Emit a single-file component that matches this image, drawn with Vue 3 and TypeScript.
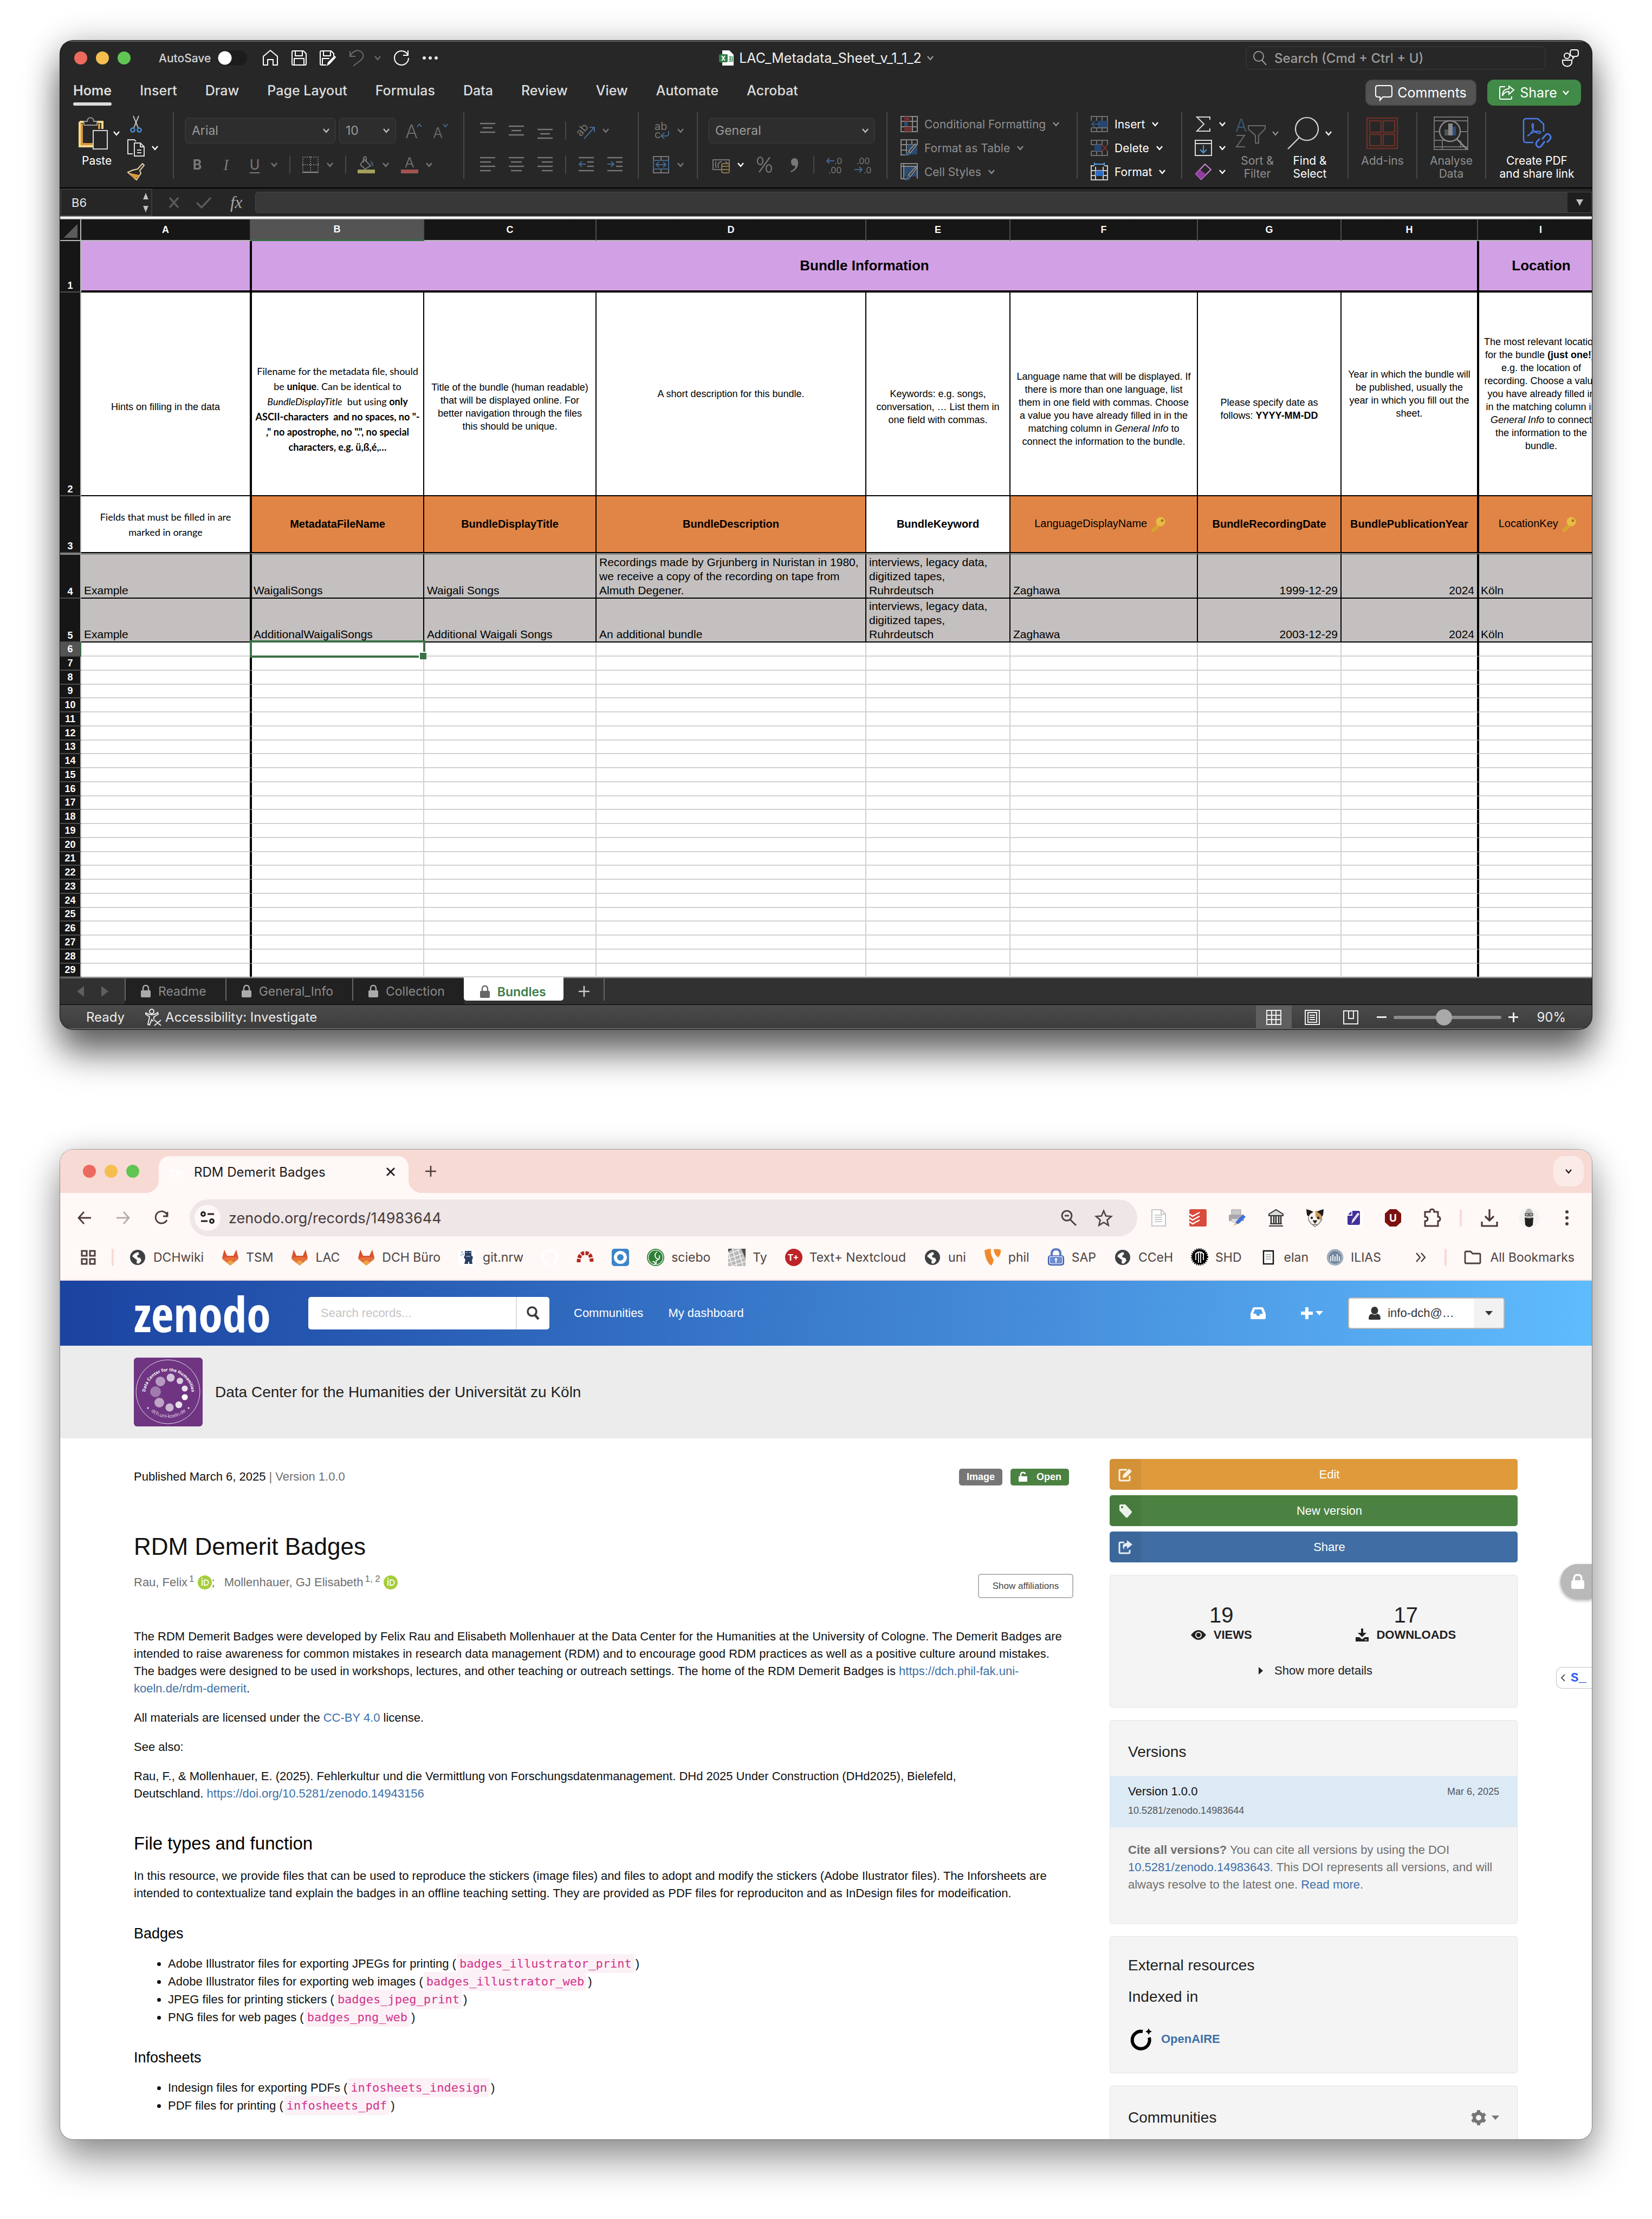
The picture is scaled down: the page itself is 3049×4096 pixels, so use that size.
<script setup lang="ts">
import { h, ref } from 'vue'

type IconDef = [number, number, string]

const globe = '<circle cx="16" cy="16" r="14" fill="#3c4043"/><path d="M6 14c3-5 7-7 11-8l2 4-4 3 1 3 5 1 2 5-4 5c-3 1-5 0-5-2l1-4-4-3z" fill="#fef8f6"/><path d="M20 6l5 4-3 4-3-3zM5 19l4 3 1 4c-3-2-4-4-5-7z" fill="#3c4043"/>'
const gitlab = '<path d="M16 31L1 19 5 2l5 11h12l5-11 4 17z" fill="#e6703a"/><path d="M5 2l5 11h12l5-11 4 15-15-2-15 2z" fill="#d8512f"/><path d="M10 25l6-4 6 4-6 6z" fill="#efa544"/>'
const lines = (ys: number[][]) => ys.map(([x, y, w]) => `<path d="M${x} ${y}h${w}" stroke="#777" stroke-width="2.4"/>`).join('')

const icons: Record<string, IconDef> = {
  chev: [14, 10, '<path d="M2 2l5 6 5-6" fill="none" stroke="currentColor" stroke-width="2.4"/>'],
  home: [32, 32, '<path d="M3 13L16 2l13 11v16h-8V19h-10v10H3z" fill="none" stroke="#fff" stroke-width="2"/>'],
  save: [32, 32, '<path d="M3 5q0-2 2-2h19l5 5v19q0 2-2 2H5q-2 0-2-2z M9 3v9h13V3 M7 29V17h18v12" fill="none" stroke="#fff" stroke-width="2"/>'],
  saveEdit: [32, 32, '<path d="M13 29H4q-2 0-2-2V5q0-2 2-2h18l5 5v5 M8 3v9h13V3 M6 29V17h13" fill="none" stroke="#fff" stroke-width="2"/><path d="M14 31l2-7L27 13q3-2 4 2L20 27z" fill="#fff"/>'],
  undo: [32, 32, '<path d="M4 3v10h10 M4 13C9 3 18 0 24 4c7 5 5 12 0 16L10 31" fill="none" stroke="#6a6a6a" stroke-width="2"/>'],
  redo: [32, 32, '<path d="M28 2v9h-9 M28 11A13 13 0 1 0 29 16" fill="none" stroke="#fff" stroke-width="2"/>'],
  dots: [32, 10, '<g fill="#e6e6e6"><circle cx="5" cy="5" r="3"/><circle cx="16" cy="5" r="3"/><circle cx="27" cy="5" r="3"/></g>'],
  xls: [28, 30, '<path d="M6 1h13l8 8v20H6z" fill="#fff"/><path d="M18 13h7v8h-7M18 17h7M21 13v8" stroke="#3d8a55" fill="none" stroke-width="1.4"/><rect y="8" width="16" height="15" rx="2" fill="#2f7d46"/><path d="M5 11l6 9M11 11l-6 9" stroke="#fff" stroke-width="2"/>'],
  lens: [26, 28, '<circle cx="11" cy="11" r="9" fill="none" stroke="currentColor" stroke-width="2"/><path d="M17 18l8 9" stroke="currentColor" stroke-width="2"/>'],
  person: [32, 32, '<g fill="none" stroke="#fff" stroke-width="2"><circle cx="10" cy="12" r="5"/><path d="M2 20h17v4a8 7 0 0 1-17 0z"/><path d="M19 1h8q4 0 4 4v4q0 4-4 4h-3l-3 4v-4q-5 0-5-6 0-6 3-6z"/></g>'],
  comment: [32, 30, '<path d="M5 2h22q4 0 4 4v13q0 4-4 4H14l-5 6v-6H5q-4 0-4-4V6q0-4 4-4z" fill="none" stroke="#fff" stroke-width="2"/>'],
  share: [30, 28, '<path d="M12 3H4q-2 0-2 2v19q0 2 2 2h18q2 0 2-2v-3" fill="none" stroke="#fff" stroke-width="2"/><path d="M19 2l9 7-9 8v-5c-6 0-10 3-12 8 0-8 4-13 12-13z" fill="none" stroke="#fff" stroke-width="2"/>'],
  paste: [54, 60, '<path d="M2 9h42v13M2 9v45h24" fill="none" stroke="#f3d98d" stroke-width="4"/><path d="M6 12v38h20M38 12v10" fill="none" stroke="#dd963a" stroke-width="4"/><path d="M10 15V8h6c0-9 12-9 12 0h6v7z" fill="#272727" stroke="#9a9a9a" stroke-width="2"/><rect x="27" y="25" width="26" height="34" fill="#272727" stroke="#d6d6d6" stroke-width="2"/>'],
  cut: [32, 32, '<path d="M11 1l9 22M21 1l-9 22" stroke="#d8d8d8" stroke-width="1.8"/><g fill="none" stroke="#4a90d6" stroke-width="2.4"><circle cx="10" cy="27" r="3.6"/><circle cx="22" cy="27" r="3.6"/></g>'],
  copy: [32, 32, '<path d="M10 27H1V1h12l3 3" fill="none" stroke="#ddd" stroke-width="2"/><path d="M13 7h11l7 7v17H13zM24 7v7h7M18 20h8M18 25h8" fill="none" stroke="#ddd" stroke-width="2"/>'],
  brush: [32, 32, '<path d="M19 11l9-10 3 3-8 10 2 5-8 12L1 17l9-4z" fill="none" stroke="#e8d9a8" stroke-width="2"/><path d="M3 18l19 4-8 9z" fill="#dd963a"/>'],
  grow: [32, 32, '<text x="0" y="30" font-size="34" font-family="Inter" font-weight="300" fill="#6e6e6e">A</text><path d="M22 9l4-5 4 5" fill="none" stroke="#4a6a8c" stroke-width="2"/>'],
  shrink: [32, 32, '<text x="2" y="30" font-size="27" font-family="Inter" font-weight="300" fill="#6e6e6e">A</text><path d="M21 4l4 5 4-5" fill="none" stroke="#4a6a8c" stroke-width="2"/>'],
  borders: [32, 32, '<path d="M1 2h30M1 16h30M2 1v28M16 1v28M30 1v28" stroke="#777" stroke-width="2" stroke-dasharray="2 2"/><path d="M1 30h30" stroke="#888" stroke-width="2.4"/>'],
  fill: [32, 32, '<path d="M12 6l12 12-10 6L5 16zM11 12V3q3-4 5 0v8" fill="none" stroke="#777" stroke-width="2"/><path d="M23 8q7 3 6 12l-3-4z" fill="#3b5a7a"/><rect y="25" width="32" height="7" fill="#a3a15b"/>'],
  color: [32, 32, '<text x="7" y="21" font-size="26" font-family="Inter" font-weight="300" fill="#7a7a7a">A</text><rect y="25" width="32" height="7" fill="#a35450"/>'],
  vTop: [32, 32, lines([[2, 3, 28], [7, 11, 18], [2, 19, 28]])],
  vMid: [32, 32, lines([[2, 8, 28], [7, 16, 18], [2, 24, 28]])],
  vBot: [32, 32, lines([[2, 14, 28], [7, 22, 18], [2, 30, 28]])],
  aLeft: [32, 32, lines([[2, 3, 28], [2, 11, 20], [2, 19, 28], [2, 27, 20]])],
  aMid: [32, 32, lines([[2, 3, 28], [6, 11, 20], [2, 19, 28], [6, 27, 20]])],
  aRight: [32, 32, lines([[2, 3, 28], [10, 11, 20], [2, 19, 28], [10, 27, 20]])],
  outdent: [32, 32, lines([[2, 3, 28], [18, 11, 12], [18, 19, 12], [2, 27, 28]]) + '<path d="M15 15H3M8 10l-5 5 5 5" fill="none" stroke="#44688f" stroke-width="2"/>'],
  indent: [32, 32, lines([[2, 3, 28], [18, 11, 12], [18, 19, 12], [2, 27, 28]]) + '<path d="M2 15h12M9 10l5 5-5 5" fill="none" stroke="#44688f" stroke-width="2"/>'],
  orient: [32, 32, '<text x="2" y="24" font-size="20" font-family="Inter" fill="#777" transform="rotate(-50 8 22)">ab</text><path d="M12 31L31 10M22 10h9v9" fill="none" stroke="#44688f" stroke-width="2"/>'],
  wrap: [32, 32, '<text x="4" y="15" font-size="20" font-family="Inter" fill="#777">ab</text><text x="4" y="30" font-size="20" font-family="Inter" fill="#777">c</text><path d="M30 17v5q0 4-4 4h-9M22 20l-6 6 6 5" fill="none" stroke="#44688f" stroke-width="2"/>'],
  merge: [32, 32, '<path d="M2 1h28v30H2zM16 1v6M16 25v6" fill="none" stroke="#777" stroke-width="2"/><path d="M2 8h28v16H2zM7 16h18M12 11l-5 5 5 5M20 11l5 5-5 5" fill="none" stroke="#44688f" stroke-width="2"/>'],
  money: [32, 32, '<path d="M1 7h30v18H1zM7 10q-3 6 0 12M17 10q-9 2-6 12M24 10l4 4" fill="none" stroke="#777" stroke-width="2"/><rect x="17" y="14" width="14" height="17" rx="3" fill="#272727" stroke="#8a7648" stroke-width="2"/><path d="M17 19h14M17 25h14" stroke="#8a7648" stroke-width="2"/>'],
  percent: [32, 32, '<g fill="none" stroke="#777" stroke-width="2.2"><ellipse cx="8" cy="9" rx="5" ry="7"/><ellipse cx="24" cy="23" rx="5" ry="7"/><path d="M26 2L6 30"/></g>'],
  comma: [32, 32, '<path d="M11 28q9-4 9-10-8 1-8-7 0-7 7-7 6 0 6 9 0 12-13 17z" fill="#777"/>'],
  dec1: [32, 34, '<text x="16" y="16" font-size="16" font-family="Inter" fill="#777">.0</text><text x="5" y="33" font-size="16" font-family="Inter" fill="#777">.00</text><path d="M16 10H2M7 5l-5 5 5 5" fill="none" stroke="#44688f" stroke-width="2"/>'],
  dec2: [32, 34, '<text x="4" y="16" font-size="16" font-family="Inter" fill="#777">.00</text><text x="17" y="33" font-size="16" font-family="Inter" fill="#777">.0</text><path d="M0 26h14M9 21l5 5-5 5" fill="none" stroke="#44688f" stroke-width="2"/>'],
  cond: [32, 30, '<path d="M1 1h30v28H1zM1 10h30M1 20h30M11 1v28M22 1v28" fill="none" stroke="#8a8a8a" stroke-width="2"/><rect x="7" y="1" width="10" height="9" fill="#6e2f2f"/><rect x="7" y="11" width="6" height="8" fill="#2c4b70"/><rect x="7" y="20" width="14" height="9" fill="#6e2f2f"/>'],
  fmtTable: [32, 32, '<path d="M14 29H1V1h30v10M1 10h30M1 20h12M11 1v28M21 1v9" fill="none" stroke="#8a8a8a" stroke-width="2"/><path d="M12 10h19v18H16z" fill="#2c4b70"/><path d="M30 10L18 25l-3-3L27 9z" fill="#272727" stroke="#8a8a8a" stroke-width="2"/><path d="M6 30q4-1 5-5 4-3 7 1-1 6-12 4z" fill="#3d5f86"/>'],
  cellStyles: [32, 32, '<path d="M14 29H1V1h30v28M1 6h30M6 1v28" fill="none" stroke="#8a8a8a" stroke-width="2"/><path d="M7 7h23v18H7z" fill="#2c4b70"/><path d="M30 9L18 25l-3-3L27 8z" fill="#272727" stroke="#8a8a8a" stroke-width="2"/><path d="M6 31q4-1 5-5 4-3 7 1-1 6-12 4z" fill="#3d5f86"/>'],
  insert: [32, 30, '<path d="M1 9V1h30v28H1v-7M11 1v8M21 1v8M11 21v8M21 21v8M1 22h30" fill="none" stroke="#6f6f6f" stroke-width="2"/><rect x="13" y="9" width="18" height="12" fill="#28466d"/><path d="M18 15H2M8 9l-6 6 6 6" fill="none" stroke="#34557c" stroke-width="2"/>'],
  delete: [32, 30, '<path d="M1 9V1h30v8M1 21v8h30v-8M11 1v8M21 1v8M11 21v8M21 21v8M1 9h20M1 21h20" fill="none" stroke="#6f6f6f" stroke-width="2"/><rect x="7" y="9" width="13" height="12" fill="#28466d"/><path d="M21 9l10 12M31 9L21 21" stroke="#7c3030" stroke-width="2"/>'],
  format: [32, 34, '<path d="M7 3h18M7 0v6M25 0v6" stroke="#5aa1e3" stroke-width="2"/><path d="M6 6H1v26h30V6h-5M1 15h30M1 24h30M9 8v24M23 8v24" fill="none" stroke="#d0d0d0" stroke-width="2"/><rect x="9" y="15" width="14" height="10" fill="#2c6cc0"/>'],
  sum: [32, 30, '<path d="M28 7V2H4l13 13L4 28h24v-5" fill="none" stroke="#d8d8d8" stroke-width="2"/>'],
  fillDown: [32, 30, '<path d="M1 1h30v28H1zM1 7h30" fill="none" stroke="#d8d8d8" stroke-width="2"/><path d="M16 10v14M10 18l6 6 6-6" fill="none" stroke="#4a9ae0" stroke-width="2"/>'],
  clear: [32, 32, '<path d="M19 2l11 10-18 18L2 20z" fill="none" stroke="#c98ad6" stroke-width="2"/><path d="M10 12l11 9-9 9L2 20z" fill="#8f3ba0"/>'],
  sort: [56, 56, '<text x="0" y="25" font-size="32" font-family="Inter" font-weight="300" fill="#3b5a7a">A</text><path d="M2 32h15L2 53h16" fill="none" stroke="#6a6a6a" stroke-width="2"/><path d="M24 14h31v6L43 32v14h-6V32L24 20z" fill="none" stroke="#6a6a6a" stroke-width="2"/>'],
  find: [58, 60, '<circle cx="36" cy="22" r="21" fill="none" stroke="#d8d8d8" stroke-width="2.2"/><path d="M22 38L1 59" stroke="#d8d8d8" stroke-width="2.2"/>'],
  addins: [58, 58, '<g fill="none" stroke="#6b3127" stroke-width="2.4"><rect x="1" y="1" width="56" height="56"/><rect x="6" y="6" width="21" height="21"/><rect x="31" y="6" width="21" height="21"/><rect x="6" y="31" width="21" height="21"/><rect x="31" y="31" width="21" height="21"/></g>'],
  analyse: [64, 62, '<g fill="none" stroke="#717171" stroke-width="2"><rect x="1" y="1" width="62" height="60"/><path d="M1 8h62M1 28h10M1 44h20M50 28h13M1 56h62M16 44v17M50 44v14"/></g><circle cx="30" cy="27" r="19" fill="#272727" stroke="#8a8a8a" stroke-width="2.4"/><path d="M43 42l19 19" stroke="#8a8a8a" stroke-width="3"/><rect x="20" y="24" width="7" height="11" fill="#555"/><rect x="27" y="13" width="8" height="22" fill="#8a8a8a"/><rect x="35" y="19" width="6" height="16" fill="#2f4f7a"/>'],
  pdf: [52, 58, '<path d="M20 46H7q-5 0-5-5V7q0-5 5-5h21l11 10v14" fill="none" stroke="#4a7be8" stroke-width="2.6"/><path d="M9 34c7-3 12-12 11-21-1-4-4 0-2 5 2 7 7 11 13 11 4 0 3-4-2-4-8 0-14 4-20 9z" fill="none" stroke="#4a7be8" stroke-width="2"/><path d="M36 40l6-7q4-5 8-1t0 9l-5 5M41 44l-6 8q-4 5-8 1t0-9l5-5" fill="none" stroke="#4a7be8" stroke-width="3"/>'],
  cross: [22, 22, '<path d="M3 2l16 18M19 2L3 20" stroke="#5a5a5a" stroke-width="3.4"/>'],
  tick: [30, 22, '<path d="M2 11l9 9L28 2" fill="none" stroke="#5a5a5a" stroke-width="3.4"/>'],
  key: [28, 28, '<path d="M16 11L2 24l1 4h4l2-3h3l1-4h3l1-4 4-2z" fill="#d7a62c"/><circle cx="19" cy="9" r="8.500" fill="#e8bd45"/><circle cx="22" cy="7" r="2.400" fill="#a26a1c"/>'],
  lock: [18, 24, '<path d="M4 11V7q0-6 5-6t5 6v4" fill="none" stroke="currentColor" stroke-width="2.4"/><rect y="10" width="18" height="13" rx="2" fill="currentColor"/>'],
  access: [30, 32, '<g fill="none" stroke="#eee" stroke-width="2"><circle cx="12" cy="5" r="4"/><path d="M1 7q5 4 11 4t11-4l1 3-8 5v5M1 7l0 3 7 5-3 14 3 1 4-10 3 3M17 21l12 10M29 21L17 31"/></g>'],
  gridView: [28, 28, '<path d="M1 1h26v26H1zM1 10h26M1 18h26M10 1v26M18 1v26" fill="none" stroke="#eee" stroke-width="2"/>'],
  pageView: [28, 28, '<path d="M1 1h26v26H1zM6 5h16v18H6zM9 10h10M9 14h10M9 18h10" fill="none" stroke="#eee" stroke-width="2"/>'],
  breakView: [28, 26, '<path d="M1 1h26v24H1zM10 1v14h9V1" fill="none" stroke="#eee" stroke-width="2"/>'],
  close: [18, 18, '<path d="M2 2l14 14M16 2L2 16" stroke="#1f1a1a" stroke-width="2.6"/>'],
  plusThin: [22, 22, '<path d="M11 1v20M1 11h20" stroke="currentColor" stroke-width="2.6"/>'],
  back: [26, 24, '<path d="M25 12H2M12 1L2 12l10 11" fill="none" stroke="#4c3a38" stroke-width="2.8"/>'],
  forward: [26, 24, '<path d="M1 12h23M14 1l10 11-10 11" fill="none" stroke="#b5adab" stroke-width="2.8"/>'],
  reload: [26, 24, '<path d="M24 1v8h-8M24 9A11 11 0 1 0 23 16" fill="none" stroke="#4c3a38" stroke-width="2.8"/>'],
  site: [26, 24, '<g fill="none" stroke="#1f1a1a" stroke-width="3"><circle cx="5" cy="5" r="3.4"/><path d="M13 5h12M1 18h12"/><circle cx="21" cy="18" r="3.4"/></g>'],
  zoomOut: [30, 30, '<circle cx="12" cy="11" r="9" fill="none" stroke="#4c4443" stroke-width="3"/><path d="M18 18l11 11M8 11h8" stroke="#4c4443" stroke-width="3"/>'],
  star: [32, 32, '<path d="M16 3l4 9.500 10 .8-7.600 6.600 2.300 9.800L16 24.500l-8.700 5.200 2.300-9.800L2 13.300l10-.8z" fill="none" stroke="#4c4443" stroke-width="2.6"/>'],
  doc: [32, 32, '<path d="M3 1h17l8 8v22H3z" fill="#fff" stroke="#c6c6c6" stroke-width="2"/><path d="M20 1v8h8M8 11h14M8 15h14M8 19h14M8 23h14" fill="none" stroke="#bbb" stroke-width="1.600"/>'],
  todo: [32, 32, '<rect width="32" height="32" rx="3" fill="#d84b3c"/><path d="M0 9l6 4L19 6M0 16l6 4 13-7M0 23l6 4 13-7" fill="none" stroke="#fff" stroke-width="2.4"/>'],
  print: [32, 32, '<path d="M6 1h17v10H6z" fill="#c9c9c9" stroke="#999"/><rect x="1" y="10" width="28" height="12" rx="2" fill="#a7a7ac"/><rect x="6" y="18" width="17" height="7" fill="#ddd"/><path d="M12 28l3-6 12-12 5 4-13 13z" fill="#3c6fe0"/><path d="M10 31l3-7 4 3z" fill="#e5b25c"/>'],
  bank: [32, 32, '<path d="M3 9L16 1l13 8v3H3zM5 27h22M3 31h26" fill="#d9d9d9" stroke="#333" stroke-width="2"/><path d="M7 12v14M12 12v14M16 12v14M21 12v14M25 12v14" stroke="#333" stroke-width="2.6"/>'],
  dog: [32, 32, '<path d="M4 3h24v14l-4 8-8 7-8-7-4-8z" fill="#f7f3ec"/><path d="M17 3h10l2 9-2 8-6-1-4-6z" fill="#c79a5c"/><path d="M0 0l7 2 6 3-6 4-3 5-3-4zM32 0l-7 2-5 3 6 4 3 5 2-4z" fill="#1d1a19"/><circle cx="10" cy="16" r="2.200" fill="#222"/><circle cx="22" cy="16" r="2.200" fill="#222"/><path d="M12 21h8l-4 5zM12 28h8" fill="#222" stroke="#222"/><path d="M4 15v5l5 7 7 5 7-5 5-7v-5" fill="none" stroke="#777" stroke-width="1.500"/>'],
  editDoc: [32, 32, '<rect width="32" height="32" rx="6" fill="#fff"/><path d="M12 3h12q3 0 3 3v20q0 3-3 3H7q-3 0-3-3V11z" fill="#43309a"/><path d="M12 3v8H4M25 9l-9 12-3 3 1-4 9-12z" fill="none" stroke="#fff" stroke-width="1.800"/>'],
  ublock: [32, 32, '<path d="M10 0h12l9 8v16l-9 8H10l-9-8V8z" fill="#7c0f0f"/><text x="16" y="23" text-anchor="middle" font-size="19" font-weight="700" font-family="Inter" fill="#fff">U</text>'],
  puzzle: [32, 34, '<path d="M3 6h9q0-5 4-5t4 5h7v9q4 0 4 4t-4 4v9H3v-9q5 0 5-4t-5-4z" fill="none" stroke="#4c3a38" stroke-width="3"/>'],
  download: [32, 32, '<path d="M16 0v21M8 13l8 8 8-8M2 23v8h28v-8" fill="none" stroke="#4c3a38" stroke-width="3.200"/>'],
  avatar: [38, 38, '<circle cx="19" cy="19" r="19" fill="#f5f3f2"/><ellipse cx="19" cy="12" rx="7" ry="10" fill="#b9b5b3"/><path d="M11 18q8 4 16 0l-1 14q-7 8-14 0z" fill="#232120"/><path d="M12 11h6v4h-6zM20 11h6v4h-6z" fill="none" stroke="#333" stroke-width="1.200"/>'],
  more: [8, 32, '<g fill="#4c3a38"><circle cx="4" cy="5" r="3"/><circle cx="4" cy="16" r="3"/><circle cx="4" cy="27" r="3"/></g>'],
  apps: [28, 28, '<path d="M2 2h9v9H2zM17 2h9v9h-9zM2 17h9v9H2zM17 17h9v9h-9z" fill="none" stroke="#4c3f3d" stroke-width="3"/>'],
  globe: [32, 32, globe],
  gitlab: [32, 32, gitlab],
  gitnrw: [32, 32, '<rect width="32" height="32" rx="8" fill="#fff"/><path d="M12 4h12v9l3 2-2 7 1 6h-6v-4h-2v4h-7l2-8-3-4 2-4z" fill="#2b3f63"/><path d="M14 7h3M20 7h3M14 14h8M5 6h3M7 10h3M4 12h2" stroke="#8196bb" stroke-width="2"/>'],
  github: [32, 32, '<circle cx="16" cy="16" r="16" fill="#fff"/><path d="M12 30v-6c-5-1-7-4-7-9 0-3 1-4 2-6V4l5 2h8l5-2v5c1 2 2 3 2 6 0 5-2 8-7 9v6" fill="#fef8f6"/>'],
  redmine: [32, 32, '<path d="M4 25q0-17 12-17t12 17" fill="none" stroke="#b5261e" stroke-width="7" stroke-dasharray="6 2"/>'],
  ring: [32, 32, '<rect width="32" height="32" rx="5" fill="#3c85c9"/><circle cx="16" cy="16" r="9" fill="none" stroke="#fff" stroke-width="6"/>'],
  sciebo: [32, 32, '<circle cx="16" cy="16" r="16" fill="#2f7f38"/><circle cx="16" cy="16" r="13.500" fill="none" stroke="#dfeedd" stroke-width="1.500"/><path d="M19 6q-6 3-3 10 4 5 7 2M23 12q2 8-6 10v6M10 24q5-2 5 5" fill="none" stroke="#fff" stroke-width="1.800"/>'],
  keys: [32, 32, '<rect width="32" height="32" fill="#b9b9b9"/><path d="M0 10L20 2M0 18l26-9M0 26l29-10M6 32l26-9M8 0l8 32M0 6l7 26M18 0l9 32" stroke="#f2f2f2" stroke-width="1.600"/><path d="M24 0h8v18zM0 0h8L0 6z" fill="#4d4d4d"/>'],
  textplus: [32, 32, '<circle cx="16" cy="16" r="16" fill="#bd2328"/><text x="15" y="22" text-anchor="middle" font-size="16" font-weight="700" font-family="Inter" fill="#fff">T+</text>'],
  typo3: [32, 32, '<path d="M1 3q6-3 12-3-2 9 5 21-2 8-5 10Q3 24 1 3z" fill="#f08a2c"/><path d="M18 1q8-1 13 1 1 8-5 14-7-5-8-15z" fill="#f08a2c"/>'],
  sap: [32, 32, '<path d="M8 14V9q0-8 8-8t8 8v5" fill="none" stroke="#5b79c4" stroke-width="4"/><rect x="1" y="12" width="30" height="19" rx="5" fill="#3a56ad"/><rect x="4" y="14" width="24" height="14" rx="3" fill="#6e8cd4" stroke="#e3e9f7" stroke-width="1.500"/><path d="M16 17a3 3 0 0 1 1 5v4h-2v-4a3 3 0 0 1 1-5z" fill="#fff"/>'],
  shd: [32, 32, '<circle cx="16" cy="15" r="14" fill="#000"/><circle cx="16" cy="15" r="15" fill="none" stroke="#000" stroke-width="2" stroke-dasharray="2 2"/><path d="M9 8v13M14 6v20M18 6v20M23 8v13M8 10q8-8 16 0" fill="none" stroke="#fff" stroke-width="1.800"/>'],
  elan: [32, 32, '<path d="M7 4h18v24H7z" fill="#fff" stroke="#111" stroke-width="2.400"/><path d="M11 11h10M11 15h10M11 19h10" stroke="#999" stroke-width="1.500"/>'],
  ilias: [32, 32, '<circle cx="16" cy="16" r="15" fill="#73879c"/><circle cx="16" cy="16" r="13" fill="none" stroke="#d5dde5" stroke-width="2" stroke-dasharray="2 1"/><path d="M8 14v9M12 11v12M16 14v9M20 10v13M24 14v9" stroke="#e7ecf1" stroke-width="2.200"/>'],
  more2: [20, 18, '<path d="M2 1l7 8-7 8M11 1l7 8-7 8" fill="none" stroke="#4c3f3d" stroke-width="2.400"/>'],
  folder: [32, 26, '<path d="M2 22V4q0-2 2-2h8l4 4h12q2 0 2 2v14q0 2-2 2H4q-2 0-2-2z" fill="none" stroke="#4c3f3d" stroke-width="2.800"/>'],
  search: [26, 26, '<circle cx="11" cy="10" r="8" fill="none" stroke="#3c3c3c" stroke-width="3.600"/><path d="M16 16l7 8" stroke="#3c3c3c" stroke-width="4.400"/>'],
  inbox: [28, 24, '<path d="M7 1h14q2 0 3 2l4 10v8q0 2-2 2H2q-2 0-2-2v-8L4 3q1-2 3-2z" fill="#fff"/><path d="M5 13l3-8h12l3 8h-5l-2 4h-4l-2-4z" fill="#4d9fe8"/>'],
  plusBold: [22, 22, '<path d="M11 0v22M0 11h22" stroke="#fff" stroke-width="6"/>'],
  caret: [14, 8, '<path d="M0 0h14L7 8z" fill="currentColor"/>'],
  user: [22, 24, '<ellipse cx="11" cy="7" rx="6.500" ry="7" fill="#333"/><path d="M0 22q0-8 6-9 5 4 10 0 6 1 6 9 0 2-2 2H2q-2 0-2-2z" fill="#333"/>'],
  orcid: [26, 26, '<circle cx="13" cy="13" r="13" fill="#a6ce39"/><path d="M8 8v11" stroke="#fff" stroke-width="2"/><circle cx="8" cy="5.500" r="1.200" fill="#fff"/><path d="M12 8.500h3a4.700 4.700 0 0 1 0 9.500h-3z" fill="none" stroke="#fff" stroke-width="1.800"/>'],
  unlock: [18, 18, '<path d="M5 9V5q0-4 4-4t4 3" fill="none" stroke="#fff" stroke-width="2.600"/><rect x="1" y="8" width="16" height="10" rx="1" fill="#fff"/>'],
  edit: [26, 26, '<path d="M16 4H4q-2 0-2 2v16q0 2 2 2h15q2 0 2-2v-7" fill="none" stroke="#fbf0e2" stroke-width="3"/><path d="M8 19l1-6L20 2l5 5-11 11z" fill="#fbf0e2"/>'],
  tag: [24, 26, '<path d="M1 3q0-2 2-2h9l11 12q2 2 0 4l-7 8q-2 1-3 0L1 12z" fill="#eaf2e9"/><circle cx="6" cy="6" r="2" fill="#467a3d"/>'],
  shareBox: [26, 26, '<path d="M11 4H4q-2 0-2 2v16q0 2 2 2h15q2 0 2-2v-4" fill="none" stroke="#e6edf5" stroke-width="3"/><path d="M16 0l10 8-10 8v-5c-5 0-6 3-5 7-5-6-3-13 5-13z" fill="#e6edf5"/>'],
  eye: [28, 20, '<path d="M0 10Q14-8 28 10 14 28 0 10z" fill="#212121"/><circle cx="14" cy="10" r="6" fill="#f4f4f4"/><circle cx="14" cy="10" r="4" fill="#212121"/>'],
  dl: [24, 24, '<path d="M10 0h4v8h6l-8 8-8-8h6z" fill="#212121"/><path d="M0 16h7l5 4 5-4h7v8H0z" fill="#212121"/><path d="M17 21h4" stroke="#fff" stroke-width="1.500"/>'],
  caretR: [8, 14, '<path d="M0 0l8 7-8 7z" fill="#212121"/>'],
  aire: [40, 40, '<path d="M23 6A16 16 0 1 0 35 17" fill="none" stroke="#000" stroke-width="6"/><path d="M34 0l2 4 4 2-4 2-2 4-2-4-4-2 4-2z" fill="#000"/>'],
  gear: [28, 28, '<circle cx="14" cy="14" r="8" fill="none" stroke="#767676" stroke-width="6"/><path d="M14 0v5M14 23v5M2 7l4 3M22 18l4 3M2 21l4-3M22 10l4-3" stroke="#767676" stroke-width="6"/>'],
  padlock: [24, 28, '<path d="M5 14V9q0-7 7-7t7 7v5" fill="none" stroke="#fff" stroke-width="3.400"/><rect x="0" y="12" width="24" height="16" rx="3" fill="#fff"/>'],
  left: [8, 14, '<path d="M7 1L1 7l6 6" fill="none" stroke="#555" stroke-width="2"/>'],
}

const Icon = (p: { n: string }) => {
  const [w, ht, body] = icons[p.n]
  return h('svg', { width: w, height: ht, viewBox: `0 0 ${w} ${ht}`, 'aria-hidden': 'true', innerHTML: body })
}
Icon.props = ['n']

const ribbonTabs = ['Home', 'Insert', 'Draw', 'Page Layout', 'Formulas', 'Data', 'Review', 'View', 'Automate', 'Acrobat']
const columns = ['A', 'B', 'C', 'D', 'E', 'F', 'G', 'H', 'I']
const emptyRows = Array.from({ length: 24 }, (_, i) => i + 6)

const hints = [
  { cls: 'low', html: 'Hints on filling in the data' },
  { cls: 'lower wide thick', html: 'Filename for the metadata file, should<br>be <b>unique</b>. Can be identical to<br><i>BundleDisplayTitle</i>&nbsp; but using <b>only</b><br><b>ASCII-characters&nbsp; and no spaces, no "-</b><br><b>," no apostrophe, no ".", no special</b><br><b>characters, e.g. ü,ß,é,…</b>' },
  { cls: 'low', html: 'Title of the bundle (human readable)<br>that will be displayed online. For<br>better navigation through the files<br>this should be unique.' },
  { cls: '', html: 'A short description for this bundle.' },
  { cls: 'low', html: 'Keywords: e.g. songs,<br>conversation, … List them in<br>one field with commas.' },
  { cls: 'lower', html: 'Language name that will be displayed. If<br>there is more than one language, list<br>them in one field with commas. Choose<br>a value you have already filled in in the<br>matching column in <i>General Info</i> to<br>connect the information to the bundle.' },
  { cls: 'lower', html: 'Please specify date as<br>follows: <b>YYYY-MM-DD</b>' },
  { cls: '', html: 'Year in which the bundle will<br>be published, usually the<br>year in which you fill out the<br>sheet.' },
  { cls: 'thick', html: 'The most relevant location<br>for the bundle <b>(just one!)</b>,<br>e.g. the location of<br>recording. Choose a value<br>you have already filled in<br>in the matching column in<br><i>General Info</i> to connect<br>the information to the<br>bundle.' },
]
const fields = [
  { t: 'MetadataFileName', cls: 'req bold thick' }, { t: 'BundleDisplayTitle', cls: 'req bold' }, { t: 'BundleDescription', cls: 'req bold' },
  { t: 'BundleKeyword', cls: 'bold' }, { t: 'LanguageDisplayName', cls: 'req keyed', key: true }, { t: 'BundleRecordingDate', cls: 'req bold' },
  { t: 'BundlePublicationYear', cls: 'req bold' }, { t: 'LocationKey', cls: 'req keyed thick', key: true },
]
const keywords = ['interviews, legacy data,', 'digitized tapes,', 'Ruhrdeutsch']
const examples = [
  { n: 4, cells: [['Example'], ['WaigaliSongs'], ['Waigali Songs'], ['Recordings made by Grjunberg in Nuristan in 1980,', 'we receive a copy of the recording on tape from', 'Almuth Degener.'], keywords, ['Zaghawa'], ['1999-12-29'], ['2024'], ['Köln']] },
  { n: 5, cells: [['Example'], ['AdditionalWaigaliSongs'], ['Additional Waigali Songs'], ['An additional bundle'], keywords, ['Zaghawa'], ['2003-12-29'], ['2024'], ['Köln']] },
]
const sheets = ['Readme', 'General_Info', 'Collection', 'Bundles']

const extensions = ['doc', 'todo', 'print', 'bank', 'dog', 'editDoc', 'ublock', 'puzzle']
const bookmarks = [
  ['globe', 'DCHwiki'], ['gitlab', 'TSM'], ['gitlab', 'LAC'], ['gitlab', 'DCH Büro'], ['gitnrw', 'git.nrw'], ['github', ''], ['redmine', ''], ['ring', ''],
  ['sciebo', 'sciebo'], ['keys', 'Ty'], ['textplus', 'Text+ Nextcloud'], ['globe', 'uni'], ['typo3', 'phil'], ['sap', 'SAP'], ['globe', 'CCeH'], ['shd', 'SHD'], ['elan', 'elan'], ['ilias', 'ILIAS'],
]
const badgeFiles = [
  ['Adobe Illustrator files for exporting JPEGs for printing', 'badges_illustrator_print'],
  ['Adobe Illustrator files for exporting web images', 'badges_illustrator_web'],
  ['JPEG files for printing stickers', 'badges_jpeg_print'],
  ['PNG files for web pages', 'badges_png_web'],
]
const infoFiles = [
  ['Indesign files for exporting PDFs', 'infosheets_indesign'],
  ['PDF files for printing', 'infosheets_pdf'],
]
const dots = [[68, 37, 7.4, .7], [85, 43, 6, .75], [94, 57, 5.6, .85], [94, 73, 5.6, 1], [83, 87, 6.3, .85], [66, 92, 7.6, .65], [47, 83, 9, .55], [40, 63, 10, .35], [49, 44, 9, .5]]

const url = ref('zenodo.org/records/14983644')
const zoom = ref(46)
const cellName = ref('B6')
</script>

<template>
  <main class="desk">
    <section class="win excel" aria-label="Spreadsheet">
      <header class="titlebar">
        <div class="side">
          <div class="lights"><i class="red"></i><i class="amber"></i><i class="green"></i></div>
          <label class="autosave">AutoSave<input type="checkbox" class="toggle"></label>
          <div class="quick">
            <button aria-label="Home"><Icon n="home" /></button>
            <button aria-label="Save"><Icon n="save" /></button>
            <button aria-label="Save as"><Icon n="saveEdit" /></button>
            <button class="undo" aria-label="Undo"><Icon n="undo" /><Icon n="chev" class="dim" /></button>
            <button aria-label="Redo"><Icon n="redo" /></button>
            <button aria-label="More"><Icon n="dots" /></button>
          </div>
        </div>
        <h1 class="doc-title"><Icon n="xls" /><span>LAC_Metadata_Sheet_v_1_1_2</span><Icon n="chev" class="soft" /></h1>
        <div class="side end">
          <label class="cmd"><Icon n="lens" /><input type="search" placeholder="Search (Cmd + Ctrl + U)" aria-label="Search"></label>
          <button aria-label="Presence"><Icon n="person" /></button>
        </div>
      </header>

      <nav class="tabs">
        <button v-for="(t, i) in ribbonTabs" :key="t" class="tab" :class="{ active: i === 0 }">{{ t }}</button>
        <span class="grow"></span>
        <button class="pill grey"><Icon n="comment" />Comments</button>
        <button class="pill green-bg"><Icon n="share" />Share<Icon n="chev" /></button>
      </nav>

      <div class="ribbon">
        <div class="grp clip">
          <button class="paste"><span><Icon n="paste" /><Icon n="chev" /></span><b>Paste</b></button>
          <div class="stack">
            <button aria-label="Cut"><Icon n="cut" /></button>
            <button aria-label="Copy"><Icon n="copy" /><Icon n="chev" /></button>
            <button aria-label="Format painter"><Icon n="brush" /></button>
          </div>
        </div>
        <i class="vs"></i>
        <div class="grp rows font">
          <div class="combos">
            <span class="combo w-font"><select aria-label="Font"><option>Arial</option></select><Icon n="chev" /></span>
            <span class="combo w-size"><select aria-label="Font size"><option>10</option></select><Icon n="chev" /></span>
            <button class="sized" aria-label="Increase font size"><Icon n="grow" /></button>
            <button class="sized" aria-label="Decrease font size"><Icon n="shrink" /></button>
          </div>
          <div class="tools">
            <button class="letter"><b>B</b></button>
            <button class="letter"><i>I</i></button>
            <button class="tool"><u>U</u><Icon n="chev" /></button>
            <i class="vs short"></i>
            <button class="tool" aria-label="Borders"><Icon n="borders" /><Icon n="chev" /></button>
            <i class="vs short"></i>
            <button class="tool" aria-label="Fill"><Icon n="fill" /><Icon n="chev" /></button>
            <button class="tool" aria-label="Font colour"><Icon n="color" /><Icon n="chev" /></button>
          </div>
        </div>
        <i class="vs"></i>
        <div class="grp rows align">
          <div class="tools first">
            <button aria-label="Top"><Icon n="vTop" /></button><button aria-label="Middle"><Icon n="vMid" /></button><button aria-label="Bottom"><Icon n="vBot" /></button>
            <i class="vs short"></i>
            <button class="tool" aria-label="Orientation"><Icon n="orient" /><Icon n="chev" /></button>
          </div>
          <div class="tools">
            <button aria-label="Left"><Icon n="aLeft" /></button><button aria-label="Centre"><Icon n="aMid" /></button><button aria-label="Right"><Icon n="aRight" /></button>
            <i class="vs short"></i>
            <button aria-label="Outdent"><Icon n="outdent" /></button><button aria-label="Indent"><Icon n="indent" /></button>
          </div>
        </div>
        <i class="vs"></i>
        <div class="grp rows wrapping">
          <div class="tools first"><button class="tool" aria-label="Wrap"><Icon n="wrap" /><Icon n="chev" /></button></div>
          <div class="tools"><button class="tool" aria-label="Merge"><Icon n="merge" /><Icon n="chev" /></button></div>
        </div>
        <i class="vs"></i>
        <div class="grp rows number">
          <div class="combos"><span class="combo w-num"><select aria-label="Number format"><option>General</option></select><Icon n="chev" /></span></div>
          <div class="tools">
            <button class="tool" aria-label="Currency"><Icon n="money" /><Icon n="chev" class="lit" /></button>
            <button aria-label="Percent"><Icon n="percent" /></button>
            <button aria-label="Comma"><Icon n="comma" /></button>
            <i class="vs short"></i>
            <button aria-label="More decimals"><Icon n="dec1" /></button>
            <button aria-label="Fewer decimals"><Icon n="dec2" /></button>
          </div>
        </div>
        <i class="vs"></i>
        <div class="grp styles">
          <div class="stack text dimmed">
            <button><Icon n="cond" />Conditional Formatting<Icon n="chev" /></button>
            <button><Icon n="fmtTable" />Format as Table<Icon n="chev" /></button>
            <button><Icon n="cellStyles" />Cell Styles<Icon n="chev" /></button>
          </div>
        </div>
        <i class="vs"></i>
        <div class="grp cells">
          <div class="stack text">
            <button><Icon n="insert" />Insert<Icon n="chev" /></button>
            <button><Icon n="delete" />Delete<Icon n="chev" /></button>
            <button><Icon n="format" />Format<Icon n="chev" /></button>
          </div>
        </div>
        <i class="vs"></i>
        <div class="grp editing">
          <div class="stack">
            <button aria-label="Sum"><Icon n="sum" /><Icon n="chev" /></button>
            <button aria-label="Fill down"><Icon n="fillDown" /><Icon n="chev" /></button>
            <button aria-label="Clear"><Icon n="clear" /><Icon n="chev" /></button>
          </div>
          <button class="big dimmed"><span><Icon n="sort" /><Icon n="chev" /></span>Sort &amp;<br>Filter</button>
          <button class="big"><span><Icon n="find" /><Icon n="chev" /></span>Find &amp;<br>Select</button>
        </div>
        <i class="vs"></i>
        <div class="grp one addins"><button class="big dimmed"><span><Icon n="addins" /></span>Add-ins</button></div>
        <i class="vs"></i>
        <div class="grp one addins"><button class="big dimmed"><span><Icon n="analyse" /></span>Analyse<br>Data</button></div>
        <i class="vs"></i>
        <div class="grp one pdf"><button class="big"><span><Icon n="pdf" /></span>Create PDF<br>and share link</button></div>
      </div>

      <div class="formula">
        <label class="namebox"><input v-model="cellName" aria-label="Cell name"><i class="spin"></i></label>
        <button aria-label="Cancel"><Icon n="cross" /></button>
        <button aria-label="Enter"><Icon n="tick" /></button>
        <button class="fx">fx</button>
        <label class="field"><input aria-label="Formula"><i></i></label>
      </div>
      <div class="shine"></div>

      <div class="sheet">
        <table>
          <colgroup><col class="c0"><col v-for="c in columns" :key="c" :class="'c' + c"></colgroup>
          <thead>
            <tr><th class="corner"><i></i></th><th v-for="c in columns" :key="c" :class="{ sel: c === 'B' }">{{ c }}</th></tr>
          </thead>
          <tbody>
            <tr class="r1"><th>1</th><td></td><td colspan="7" class="thick">Bundle Information</td><td class="thick">Location</td></tr>
            <tr class="r2"><th>2</th><td v-for="(c, i) in hints" :key="i" :class="c.cls"><div v-html="c.html"></div></td></tr>
            <tr class="r3"><th>3</th><td class="wide">Fields that must be filled in are<br>marked in orange</td>
              <td v-for="f in fields" :key="f.t" :class="f.cls">{{ f.t }}<template v-if="f.key">&nbsp;<Icon n="key" class="key" /></template></td></tr>
            <tr v-for="r in examples" :key="r.n" class="ex" :class="'r' + r.n"><th>{{ r.n }}</th>
              <td v-for="(c, i) in r.cells" :key="i" :class="{ thick: i === 1 || i === 8, num: i === 6 || i === 7 }"><template v-for="(l, j) in c" :key="j"><br v-if="j">{{ l }}</template></td></tr>
          </tbody>
          <tbody class="blank">
            <tr v-for="n in emptyRows" :key="n"><th :class="{ cur: n === 6 }">{{ n }}</th>
              <td v-for="(c, i) in columns" :key="c" :class="{ thick: i === 1 || i === 8, cursor: n === 6 && i === 1 }"></td></tr>
          </tbody>
        </table>
      </div>

      <nav class="sheets">
        <span class="arrows"><i class="l"></i><i class="r"></i></span>
        <button v-for="s in sheets" :key="s" :class="{ on: s === 'Bundles' }"><Icon n="lock" />{{ s }}</button>
        <button class="add" aria-label="Add sheet"><Icon n="plusThin" /></button>
      </nav>
      <footer class="status">
        <span>Ready</span>
        <button class="acc"><Icon n="access" />Accessibility: Investigate</button>
        <span class="grow"></span>
        <button class="view on" aria-label="Normal view"><Icon n="gridView" /></button>
        <button class="view" aria-label="Page layout view"><Icon n="pageView" /></button>
        <button class="view" aria-label="Page break view"><Icon n="breakView" /></button>
        <i class="minus"></i>
        <input v-model="zoom" type="range" min="0" max="100" aria-label="Zoom">
        <i class="minus plus"></i>
        <span class="pct">90%</span>
      </footer>
    </section>

    <section class="win chrome" aria-label="Browser">
      <header class="strip">
        <div class="lights"><i class="red"></i><i class="amber"></i><i class="green"></i></div>
        <div class="page-tab"><span class="fav">ze</span><span class="grow">RDM Demerit Badges</span><button aria-label="Close tab"><Icon n="close" /></button></div>
        <button class="new" aria-label="New tab"><Icon n="plusThin" /></button>
        <span class="grow"></span>
        <button class="tab-list" aria-label="Search tabs"><Icon n="chev" /></button>
      </header>
      <div class="toolbar">
        <button aria-label="Back"><Icon n="back" /></button>
        <button aria-label="Forward"><Icon n="forward" /></button>
        <button aria-label="Reload"><Icon n="reload" /></button>
        <label class="omni"><span class="site"><Icon n="site" /></span><input v-model="url" aria-label="Address"><Icon n="zoomOut" /><Icon n="star" /></label>
        <div class="exts">
          <button v-for="e in extensions" :key="e" :aria-label="e"><Icon :n="e" /></button>
        </div>
        <i class="bar"></i>
        <button aria-label="Downloads"><Icon n="download" /></button>
        <button class="me" aria-label="Profile"><Icon n="avatar" /></button>
        <button aria-label="Menu"><Icon n="more" /></button>
      </div>
      <nav class="marks">
        <button aria-label="Tab groups"><Icon n="apps" /></button>
        <i class="bar"></i>
        <div class="marks-list">
          <a v-for="(b, i) in bookmarks" :key="i" href="#"><Icon :n="b[0]" /><span v-if="b[1]">{{ b[1] }}</span></a>
        </div>
        <span class="grow"></span>
        <button class="overflow" aria-label="More bookmarks"><Icon n="more2" /></button>
        <i class="bar"></i>
        <a href="#" class="all"><Icon n="folder" /><span>All Bookmarks</span></a>
      </nav>

      <div class="zen-head">
        <a href="#" class="logo">zenodo</a>
        <div class="zsearch"><input type="search" placeholder="Search records..." aria-label="Search records"><button aria-label="Search"><Icon n="search" /></button></div>
        <a href="#">Communities</a>
        <a href="#">My dashboard</a>
        <span class="grow"></span>
        <button aria-label="Inbox"><Icon n="inbox" /></button>
        <button class="plus-menu" aria-label="New"><Icon n="plusBold" /><Icon n="caret" /></button>
        <div class="account"><button><Icon n="user" />info-dch@…</button><button class="drop" aria-label="Account menu"><Icon n="caret" /></button></div>
      </div>
      <div class="community">
        <svg width="127" height="127" viewBox="0 0 127 127" aria-hidden="true">
          <rect width="127" height="127" rx="6" fill="#6f3582" />
          <circle cx="63" cy="63" r="59" fill="none" stroke="#e6dcea" stroke-width="1" />
          <path id="arcTop" d="M21 68A43 43 0 0 1 107 68" fill="none" />
          <path id="arcLow" d="M17 76A49 49 0 0 0 111 76" fill="none" />
          <text font-family="Open Sans" font-weight="700" font-size="8" fill="#fff"><textPath href="#arcTop" startOffset="50%" text-anchor="middle">Data Center for the Humanities</textPath></text>
          <text font-family="Open Sans" font-size="9" fill="#e6dcea"><textPath href="#arcLow" startOffset="50%" text-anchor="middle">dch.uni-koeln.de</textPath></text>
          <circle v-for="(d, i) in dots" :key="i" :cx="d[0]" :cy="d[1]" :r="d[2]" fill="#fff" :opacity="d[3]" />
          <circle cx="26" cy="93" r="1.500" fill="#fff" /><circle cx="101" cy="93" r="1.500" fill="#fff" />
        </svg>
        <a href="#">Data Center for the Humanities der Universität zu Köln</a>
      </div>

      <div class="record">
        <article>
          <div class="meta"><span>Published March 6, 2025</span><span class="ver">&nbsp;| Version 1.0.0</span><span class="grow"></span><span class="label">Image</span><span class="label open"><Icon n="unlock" />Open</span></div>
          <h1>RDM Demerit Badges</h1>
          <div class="authors">
            <p><a href="#">Rau, Felix</a><sup>1</sup><Icon n="orcid" />;<a href="#" class="second">Mollenhauer, GJ Elisabeth</a><sup>1, 2</sup><Icon n="orcid" /></p>
            <button>Show affiliations</button>
          </div>
          <p>The RDM Demerit Badges were developed by Felix Rau and Elisabeth Mollenhauer at the Data Center for the Humanities at the University of Cologne. The Demerit Badges are intended to raise awareness for common mistakes in research data management (RDM) and to encourage good RDM practices as well as a positive culture around mistakes.<br>The badges were designed to be used in workshops, lectures, and other teaching or outreach settings. The home of the RDM Demerit Badges is <a href="#">https://dch.phil-fak.uni-<span class="keep">koeln.de/rdm-demerit</span></a>.</p>
          <p>All materials are licensed under the <a href="#">CC-BY 4.0</a> license.</p>
          <p>See also:</p>
          <p>Rau, F., &amp; Mollenhauer, E. (2025). Fehlerkultur und die Vermittlung von Forschungsdatenmanagement. DHd 2025 Under Construction (DHd2025), Bielefeld,<br>Deutschland. <a href="#">https://doi.org/10.5281/zenodo.14943156</a></p>
          <h2>File types and function</h2>
          <p>In this resource, we provide files that can be used to reproduce the stickers (image files) and files to adopt and modify the stickers (Adobe Ilustrator files). The Inforsheets are intended to contextualize tand explain the badges in an offline teaching setting. They are provided as PDF files for reproduciton and as InDesign files for modeification.</p>
          <h3>Badges</h3>
          <ul><li v-for="f in badgeFiles" :key="f[1]">{{ f[0] }} (<code>{{ f[1] }}</code>)</li></ul>
          <h3>Infosheets</h3>
          <ul><li v-for="f in infoFiles" :key="f[1]">{{ f[0] }} (<code>{{ f[1] }}</code>)</li></ul>
        </article>

        <aside>
          <div class="actions">
            <button class="edit"><span><Icon n="edit" /></span><b>Edit</b></button>
            <button class="newv"><span><Icon n="tag" /></span><b>New version</b></button>
            <button class="shr"><span><Icon n="shareBox" /></span><b>Share</b></button>
          </div>
          <section class="card stats">
            <dl>
              <div><dd>19</dd><dt><Icon n="eye" />VIEWS</dt></div>
              <div><dd>17</dd><dt><Icon n="dl" />DOWNLOADS</dt></div>
            </dl>
            <button><Icon n="caretR" />Show more details</button>
          </section>
          <section class="card versions">
            <h2>Versions</h2>
            <div class="current"><p>Version 1.0.0<time>Mar 6, 2025</time></p><small>10.5281/zenodo.14983644</small></div>
            <p class="cite"><b>Cite all versions?</b> You can cite all versions by using the DOI <a href="#" class="keep">10.5281/zenodo.14983643</a>. This DOI represents all versions, and will always resolve to the latest one. <a href="#">Read more</a>.</p>
          </section>
          <section class="card external">
            <h2>External resources</h2>
            <h3>Indexed in</h3>
            <a href="#"><Icon n="aire" />OpenAIRE</a>
          </section>
          <section class="card comm">
            <h2>Communities</h2>
            <button aria-label="Manage communities"><Icon n="gear" /><Icon n="caret" /></button>
          </section>
        </aside>
      </div>

      <button class="float-lock" aria-label="Lock"><Icon n="padlock" /></button>
      <button class="float-s"><Icon n="left" />S_</button>
    </section>
  </main>
</template>

<style>
body { margin: 0; background: #fff; }
</style>

<style scoped>
* { box-sizing: border-box; }
button, input, select { font: inherit; color: inherit; background: none; border: 0; padding: 0; margin: 0; outline: 0; min-width: 0; }
button { display: flex; align-items: center; white-space: nowrap; }
a { color: inherit; text-decoration: none; }
h1, h2, h3, p, ul, dl, dd { margin: 0; font-weight: 400; }
svg { display: block; flex: none; overflow: visible; }
.grow { flex: 1; }
.desk { padding: 75px 111px 146px; display: flex; flex-direction: column; gap: 222px; }
.win { position: relative; border-radius: 24px; overflow: hidden; }
.excel { background: #272727; color: #e6e6e6; font-family: Inter, sans-serif; font-size: 21px; box-shadow: 0 0 0 1px #111, 0 44px 64px rgba(0, 0, 0, .58), 0 0 60px rgba(0, 0, 0, .22); }
.chrome { background: #fff; font-family: "Liberation Sans", Arial, sans-serif; font-size: 22px; color: #111; box-shadow: 0 0 0 1px rgba(0, 0, 0, .3), 0 36px 72px rgba(0, 0, 0, .42), 0 0 50px rgba(0, 0, 0, .12); }

.lights { display: flex; gap: 16px; }
.lights i { width: 24px; height: 24px; border-radius: 50%; }
.red { background: #ed6a5e; }
.amber { background: #f5bf4f; }
.green { background: #61c554; }

.titlebar { display: flex; align-items: center; height: 64px; padding: 0 24px 0 26px; box-shadow: inset 0 2px 0 #5c5f5b; }
.side { flex: 1; display: flex; align-items: center; }
.end { justify-content: flex-end; gap: 29px; }
.autosave { margin-left: 52px; display: flex; align-items: center; gap: 12px; font-weight: 500; color: #d4d4d4; }
.toggle { appearance: none; width: 55px; height: 28px; border-radius: 14px; background: radial-gradient(circle at 14px 14px, #fff 12px, transparent 13px), #1c1c1c; }
.quick { display: flex; align-items: center; gap: 21px; margin-left: 27px; }
.undo { gap: 16px; }
.dim { color: #6a6a6a; }
.soft { color: #9a9a9a; }
.doc-title { display: flex; align-items: center; gap: 9px; font-size: 25px; color: #f0f0f0; }
.cmd { display: flex; align-items: center; gap: 14px; width: 554px; height: 44px; border: 2px solid #333; border-radius: 9px; padding-left: 11px; color: #9a9a9a; font-size: 24px; font-weight: 500; }
.cmd input { flex: 1; }
.cmd input::placeholder { color: #9c9c9c; opacity: 1; }

.tabs { display: flex; align-items: flex-end; height: 56px; padding: 0 20px 0 24px; gap: 52px; font-size: 25px; font-weight: 500; color: #dcdcdc; }
.tab { height: 56px; }
.tab.active { position: relative; font-weight: 600; }
.tab.active::after { content: ""; position: absolute; left: 0; right: 0; bottom: 0; height: 6px; border-radius: 3px; background: #dcdcdc; }
.tabs .grow { margin-right: -52px; }
.pill { height: 48px; border-radius: 12px; gap: 9px; font-weight: 400; color: #fff; justify-content: center; }
.grey { width: 205px; background: #545454; border: 2px solid #4a4a4a; margin-right: -32px; }
.green-bg { width: 173px; background: #418a48; }

.ribbon { display: flex; height: 151px; padding-top: 12px; color: #fff; }
.vs { width: 2px; height: 123px; background: #474747; flex: none; }
.short { height: 34px; }
.grp { display: flex; flex: none; }
.rows { flex-direction: column; }
.clip { width: 208px; padding-left: 34px; gap: 6px; }
.paste { width: 84px; flex-direction: column; align-items: flex-start; justify-content: flex-start; padding-top: 9px; }
.paste span { display: flex; align-items: center; gap: 9px; }
.paste b { font-weight: 400; line-height: 24px; margin: 9px 0 0 6px; }
.stack { display: flex; flex-direction: column; }
.stack button { height: 44px; gap: 12px; }
.font { width: 534px; }
.font .combos { padding-left: 20px; }
.combos { display: flex; align-items: center; gap: 5px; margin-top: 10px; height: 48px; }
.combo { display: flex; align-items: center; height: 48px; border: 2px solid #353535; border-radius: 8px; background: #2d2d2d; color: #bdbdbd; font-size: 23px; padding: 0 9px 0 11px; }
.combo select { appearance: none; flex: 1; color: #9a9a9a; }
.w-font { width: 279px; }
.w-size { width: 106px; }
.w-num { width: 308px; }
.sized { width: 32px; margin-left: 12px; }
.tools { display: flex; align-items: center; gap: 21px; height: 34px; margin-top: 22px; padding-left: 27px; color: #7a7a7a; }
.tools.first { margin-top: 17px; margin-bottom: 7px; }
.tool { gap: 13px; }
.tool u { width: 32px; font-size: 25px; text-align: center; text-underline-offset: 5px; }
.letter { width: 32px; justify-content: center; font-size: 25px; }
.letter i { font-family: "Liberation Serif", serif; font-size: 29px; }
.lit { color: #fff; }
.align { width: 320px; }
.wrapping { width: 107px; }
.wrapping .tools { padding-left: 25px; }
.number { width: 348px; }
.number .combos { padding-left: 19px; }
.styles { width: 349px; padding-left: 24px; }
.cells { width: 191px; padding-left: 24px; }
.editing { width: 305px; padding-left: 23px; }
.editing .stack { width: 67px; }
.dimmed { color: #8f8f8f; }
.big { flex-direction: column; justify-content: flex-start; width: 97px; padding-top: 9px; line-height: 24px; text-align: center; }
.big span { display: flex; align-items: center; gap: 11px; height: 60px; margin-bottom: 9px; }
.one { justify-content: center; }
.one .big { width: auto; }
.addins { width: 125px; }
.pdf { flex: 1; padding-right: 8px; }

.formula { display: flex; align-items: center; height: 53px; border-top: 2px solid #000; background: #262626; }
.namebox { display: flex; align-items: center; width: 170px; height: 51px; border: 2px solid #3c3c3c; padding: 0 3px 0 19px; font-size: 22px; }
.namebox input { flex: 1; width: 60px; }
.spin { width: 14px; height: 36px; background: conic-gradient(from 158deg at 50% 0, #c0c0c0 44deg, transparent 0) top / 14px 12px no-repeat, conic-gradient(from -22deg at 50% 100%, #c0c0c0 44deg, transparent 0) bottom / 14px 12px no-repeat; }
.formula button { margin-left: 29px; }
.formula .fx { width: 34px; margin-left: 34px; margin-right: 12px; font: italic 31px "Liberation Serif", serif; color: #a8a8a8; }
.field { flex: 1; height: 39px; display: flex; align-items: center; justify-content: flex-end; background: #383838; border: 1px solid #484848; border-radius: 6px 0 0 6px; }
.field input { flex: 1; }
.field i { width: 44px; height: 37px; background: conic-gradient(from -28deg at 50% 100%, #c0c0c0 56deg, transparent 0) center / 13px 12px no-repeat #1e1e1e; border-radius: 4px; }
.shine { height: 6px; background: linear-gradient(#8d8d8d, #fff 40%, #fff 60%, #8d8d8d); }

.sheet { overflow: hidden; background: #fff; }
table { table-layout: fixed; width: 2850px; border-collapse: separate; border-spacing: 0; font-family: "Liberation Sans", Arial, sans-serif; color: #000; }
.c0 { width: 39px; } .cA { width: 313px; } .cB { width: 320px; } .cC { width: 318px; } .cD { width: 498px; }
.cE { width: 266px; } .cF { width: 346px; } .cG { width: 265px; } .cH { width: 252px; } .cI { width: 233px; }
th, td { padding: 0; overflow: hidden; white-space: nowrap; }
thead th { height: 40px; background: #161616; color: #fff; font-size: 18px; font-weight: 700; border-right: 2px solid #4d4d4d; border-bottom: 2px solid #b9b9b9; }
thead th.sel { background: #545454; border-bottom: 3px solid #357043; }
thead .corner { border-right-color: #b9b9b9; }
.corner i { display: block; width: 26px; height: 26px; margin: 4px 0 0 6px; background: linear-gradient(135deg, transparent 50%, #5b5b5b 0); }
tbody th { background: #161616; color: #fff; font-size: 18px; line-height: 20px; font-weight: 700; vertical-align: bottom; padding-bottom: 1px; border-right: 2px solid #b9b9b9; border-bottom: 2px solid #4d4d4d; }
tbody td { border-right: 2px solid #000; border-bottom: 2px solid #000; text-align: center; vertical-align: middle; }
td.thick { border-left: 2px solid #000; }
.r1 th, .r1 td { height: 95px; }
.r1 td { background: #d2a1e5; font-size: 26px; font-weight: 700; border-bottom-width: 4px; }
.r2 th, .r2 td { height: 376px; }
.r2 td { font-size: 18px; line-height: 24px; }
.r2 .low { padding-top: 48px; }
.r2 .lower { padding-top: 56px; }
.r2 .wide, .r3 .wide { font-family: Lato, sans-serif; font-size: 18px; line-height: 28px; }
.r2 td div { display: flow-root; }
.r3 th, .r3 td { height: 105px; }
.r3 td { font-size: 20px; }
.r3 .bold { font-weight: 700; }
.r3 .req { background: #e18546; }
.r3 .keyed { padding-right: 14px; }
.key { display: inline-block; vertical-align: middle; }
.r4 th, .r4 td { height: 84px; }
.r4 th, .r4 td { border-top: 3px solid #8b8b88; }
.r5 th, .r5 td { height: 81px; }
.ex td { background: #c4c0bf; font-size: 21px; line-height: 26px; text-align: left; vertical-align: bottom; padding-left: 5px; }
.ex td.thick { padding-left: 3px; }
.ex .num { text-align: right; padding-right: 5px; }
.blank th, .blank td { height: 26px; }
.blank tr:nth-child(4n) th, .blank tr:nth-child(4n) td { height: 25px; }
.blank th { line-height: 22px; }
.blank td { border-color: #d2d2d2; }
.blank td:nth-child(2), .blank td:nth-child(9) { border-right-color: #000; }
.blank td.thick { border-left-color: #000; }
.blank th.cur { background: #545454; border-right-color: #357043; }
.cursor { position: relative; overflow: visible; }
.cursor::before { content: ""; position: absolute; inset: -4px -4px -4px -4px; border: 4px solid #3b7149; z-index: 1; }
.cursor::after { content: ""; position: absolute; right: -6px; bottom: -7px; width: 12px; height: 12px; background: #3b7149; border: solid #fff; border-width: 2px 0 0 2px; z-index: 2; }

.sheets { display: flex; height: 51px; border-top: 2px solid #6c6c6c; border-bottom: 1px solid #000; background: #313131; font-size: 23px; color: #8b8b8b; }
.arrows { display: flex; align-items: center; justify-content: center; gap: 32px; width: 119px; }
.arrows i { border: solid transparent; border-width: 10px 0; }
.arrows .l { border-right: 13px solid #5f5f5f; }
.arrows .r { border-left: 13px solid #5f5f5f; }
.sheets button { padding: 0 35px 0 30px; gap: 14px; background: linear-gradient(#666, #666) left top / 2px 41px no-repeat #212121; }
.sheets button svg { color: #aaa; }
.sheets .on { height: 43px; margin-top: -2px; padding: 10px 32px 0 30px; background: #fff; color: #3b7d4b; font-weight: 600; border-radius: 0 0 5px 5px; }
.sheets .on svg { color: #666; }
.sheets .add { width: 76px; padding: 0; justify-content: center; background: linear-gradient(#666, #666) right top / 2px 41px no-repeat; }
.sheets .add svg { color: #ccc; }
.status { display: flex; align-items: center; height: 45px; padding: 0 48px 0 48px; background: linear-gradient(#4b4b4b, #3c3c3c); font-size: 24px; color: #ececec; box-shadow: inset 0 -2px 0 #666; }
.acc { gap: 7px; margin-left: 38px; }
.view { width: 66px; height: 44px; justify-content: center; margin-right: 5px; }
.view.on { background: #5f5f5f; }
.minus { width: 18px; height: 3px; background: #eee; margin-left: 10px; }
.minus.plus { background: linear-gradient(#eee, #eee) center / 18px 3px no-repeat, linear-gradient(#eee, #eee) center / 3px 18px no-repeat; height: 18px; margin-left: 13px; }
.status input { appearance: none; width: 199px; height: 6px; border-radius: 3px; background: #8b8b8b; margin-left: 13px; }
.status input::-webkit-slider-thumb { appearance: none; width: 30px; height: 30px; border-radius: 50%; background: #a9a9a9; }
.pct { margin-left: 34px; }

.strip { display: flex; align-items: center; height: 80px; background: #f8dad4; padding: 0 15px 0 42px; font-family: Inter, sans-serif; color: #1f1a1a; }
.page-tab { position: relative; align-self: flex-end; display: flex; align-items: center; width: 461px; height: 68px; margin-left: 36px; padding: 0 24px 10px 17px; background: #fef8f6; border-radius: 20px 20px 0 0; font-size: 24px; }
.page-tab::before, .page-tab::after { content: ""; position: absolute; bottom: 0; width: 24px; height: 24px; background: radial-gradient(circle at 0 0, transparent 24px, #fef8f6 24px); left: -24px; }
.page-tab::after { left: auto; right: -24px; background: radial-gradient(circle at 100% 0, transparent 24px, #fef8f6 24px); }
.fav { width: 48px; color: #fff; font-weight: 600; font-size: 24px; }
.new { margin: 0 0 0 30px; color: #4c3a38; }
.tab-list { width: 56px; height: 56px; border-radius: 20px; background: #fbebe8; justify-content: center; margin-bottom: 0; }
.toolbar { display: flex; align-items: center; height: 92px; background: #fef8f6; padding: 0 42px 0 32px; font-family: Inter, sans-serif; }
.toolbar > button { margin-right: 45px; }
.toolbar > button:last-child { margin-right: 0; }
.toolbar > .me { margin: 0 47px 0 -7px; }
.omni { flex: 1; display: flex; align-items: center; height: 68px; border-radius: 34px; background: #efe6e7; padding: 0 46px 0 9px; gap: 34px; font-size: 27px; color: #463b3b; margin: 0 24px 0 -6px; }
.omni input { flex: 1; margin-left: -19px; }
.site { width: 48px; height: 48px; border-radius: 50%; background: #fef8f6; display: flex; align-items: center; justify-content: center; }
.exts { display: flex; gap: 40px; }
.bar { width: 4px; height: 32px; border-radius: 2px; background: #f8dad4; }
.toolbar .bar { margin: 0 35px; }
.marks { display: flex; align-items: center; height: 70px; padding: 0 32px 14px 38px; background: #fef8f6; border-bottom: 2px solid #f3dedb; font-family: Inter, sans-serif; font-size: 23px; color: #4c4341; }
.marks > .bar { margin: 0 28px 0 29px; }
.marks a { display: flex; align-items: center; gap: 13px; white-space: nowrap; }
.marks-list { display: flex; gap: 33px; }
.marks .all { gap: 16px; }
.marks .overflow + .bar { margin: 0 32px 0 34px; }

.zen-head { display: flex; align-items: center; height: 120px; padding: 0 161px 0 136px; background: linear-gradient(92deg, #1b43a0, #2f69be 33%, #4790dd 66%, #5fbcfd); color: #fff; }
.logo { font-family: "Open Sans Condensed", "DejaVu Sans Condensed", sans-serif; font-weight: 300; font-size: 90px; line-height: 90px; width: 253px; }
.zsearch { display: flex; width: 445px; height: 60px; margin: 0 45px 0 69px; background: #fff; border-radius: 5px; }
.zsearch input { flex: 1; padding-left: 23px; color: #333; }
.zsearch input::placeholder { color: #c4c4c4; opacity: 1; }
.zsearch button { width: 62px; justify-content: center; border-left: 2px solid #dedede; }
.zen-head > a + a { margin-left: 46px; }
.plus-menu { gap: 5px; margin: 0 46px 0 65px; }
.account { display: flex; width: 289px; height: 58px; border: 2px solid #c0b9b2; border-radius: 5px; background: #fff; color: #333; }
.account button { flex: 1; justify-content: center; gap: 13px; }
.account .drop { flex: none; width: 55px; background: #f2f2f2; border-radius: 0 5px 5px 0; }
.community { display: flex; align-items: center; gap: 23px; height: 171px; padding: 0 136px; background: #ececec; color: #212121; font-size: 28px; }

.record { display: flex; gap: 67px; padding: 0 137px 0 136px; }
article { flex: 1734; min-width: 0; padding: 55px 0 46px; line-height: 32px; }
article > p { margin-bottom: 22px; }
article p a, .cite a { color: #4070a8; }
.keep { white-space: nowrap; }
.meta { display: flex; align-items: center; height: 32px; padding-right: 8px; }
.ver { color: #6f6f6f; }
.label { height: 31px; padding: 0 14px; margin-left: 15px; border-radius: 5px; background: #767676; color: #fff; font-size: 18px; font-weight: 700; line-height: 31px; display: flex; align-items: center; gap: 16px; }
.open { background: #4b8241; }
article h1 { font-size: 44px; line-height: 60px; margin: 83px 0 20px; }
.authors { display: flex; justify-content: space-between; align-items: flex-start; margin-bottom: 55px; color: #6f6f6f; }
.authors p { display: flex; align-items: center; }
article .authors a { color: inherit; }
.authors sup { font-size: 17px; line-height: 20px; align-self: flex-start; margin: 0 6px 0 3px; }
.authors .second { margin-left: 17px; }
.authors button { height: 45px; width: 176px; justify-content: center; border: 2px solid #b5b5b5; border-radius: 5px; font-size: 17px; color: #444; }
article h2 { font-size: 33px; line-height: 40px; margin: 56px 0 24px; color: #000; }
article h3 { font-size: 27px; line-height: 32px; margin: 42px 0 23px; color: #000; }
article ul { padding-left: 63px; line-height: 33px; }
code { font-family: "DejaVu Sans Mono", monospace; font-size: 22px; color: #d1338b; background: #fbf1f6; padding: 5px 4px; margin: 0 3px 0 2px; }

aside { flex: 753; min-width: 0; padding-top: 38px; display: flex; flex-direction: column; gap: 23px; color: #212121; }
.actions { display: flex; flex-direction: column; gap: 10px; }
.actions button { height: 57px; border-radius: 5px; overflow: hidden; color: #fff; align-items: stretch; }
.actions span { width: 58px; background: rgba(0, 0, 0, .05); display: flex; align-items: center; justify-content: center; }
.actions b { flex: 1; font-weight: 400; line-height: 57px; text-align: center; }
.edit { background: #df9a3c; }
.newv { background: #4b8241; }
.shr { background: #406da3; }
.card { background: #f4f4f4; border: 1px solid #e3e3e3; border-radius: 5px; line-height: 32px; }
.card h2 { font-size: 28px; line-height: 40px; }
.stats { height: 245px; padding: 52px 35px 0; }
.stats dl { display: flex; margin-bottom: 34px; }
.stats dl div { flex: 1; text-align: center; }
.stats dd { font-size: 40px; line-height: 42px; }
.stats dt { display: flex; align-items: center; justify-content: center; gap: 14px; font-weight: 700; }
.stats button { width: 100%; justify-content: center; gap: 21px; line-height: 32px; padding-left: 7px; }
.versions { height: 376px; padding-top: 38px; }
.versions h2 { padding: 0 33px; margin-bottom: 24px; }
.current { height: 95px; background: #dceaf6; padding: 13px 33px 0; color: #111; }
.current p { display: flex; justify-content: space-between; }
.current time, .current small { font-size: 18px; color: #555; }
.current small { display: block; line-height: 24px; margin-top: 7px; }
.cite { padding: 26px 33px 0; color: #6f6f6f; }
.external { height: 253px; padding: 33px; }
.external h3 { font-size: 28px; line-height: 32px; margin: 22px 0 42px; }
.external a { display: flex; align-items: center; gap: 17px; padding-left: 4px; height: 40px; font-weight: 700; color: #4070a8; }
.comm { display: flex; justify-content: space-between; align-items: flex-start; height: 99px; padding: 38px 33px 0; border-bottom: 0; border-radius: 5px 5px 0 0; }
.comm button { height: 40px; gap: 10px; color: #767676; }
.float-lock { position: absolute; right: 0; top: 765px; width: 58px; height: 64px; padding-left: 20px; border-radius: 32px 0 0 32px; background: #b9b9b9; box-shadow: 0 3px 6px rgba(0, 0, 0, .35); }
.float-s { position: absolute; right: 0; top: 955px; width: 66px; height: 40px; padding-left: 8px; gap: 10px; border: 1px solid #c4c4c4; border-right: 0; border-radius: 12px 0 0 12px; background: #fff; color: #2f5ff0; font-weight: 700; font-family: "Liberation Mono", monospace; font-size: 24px; }
</style>
